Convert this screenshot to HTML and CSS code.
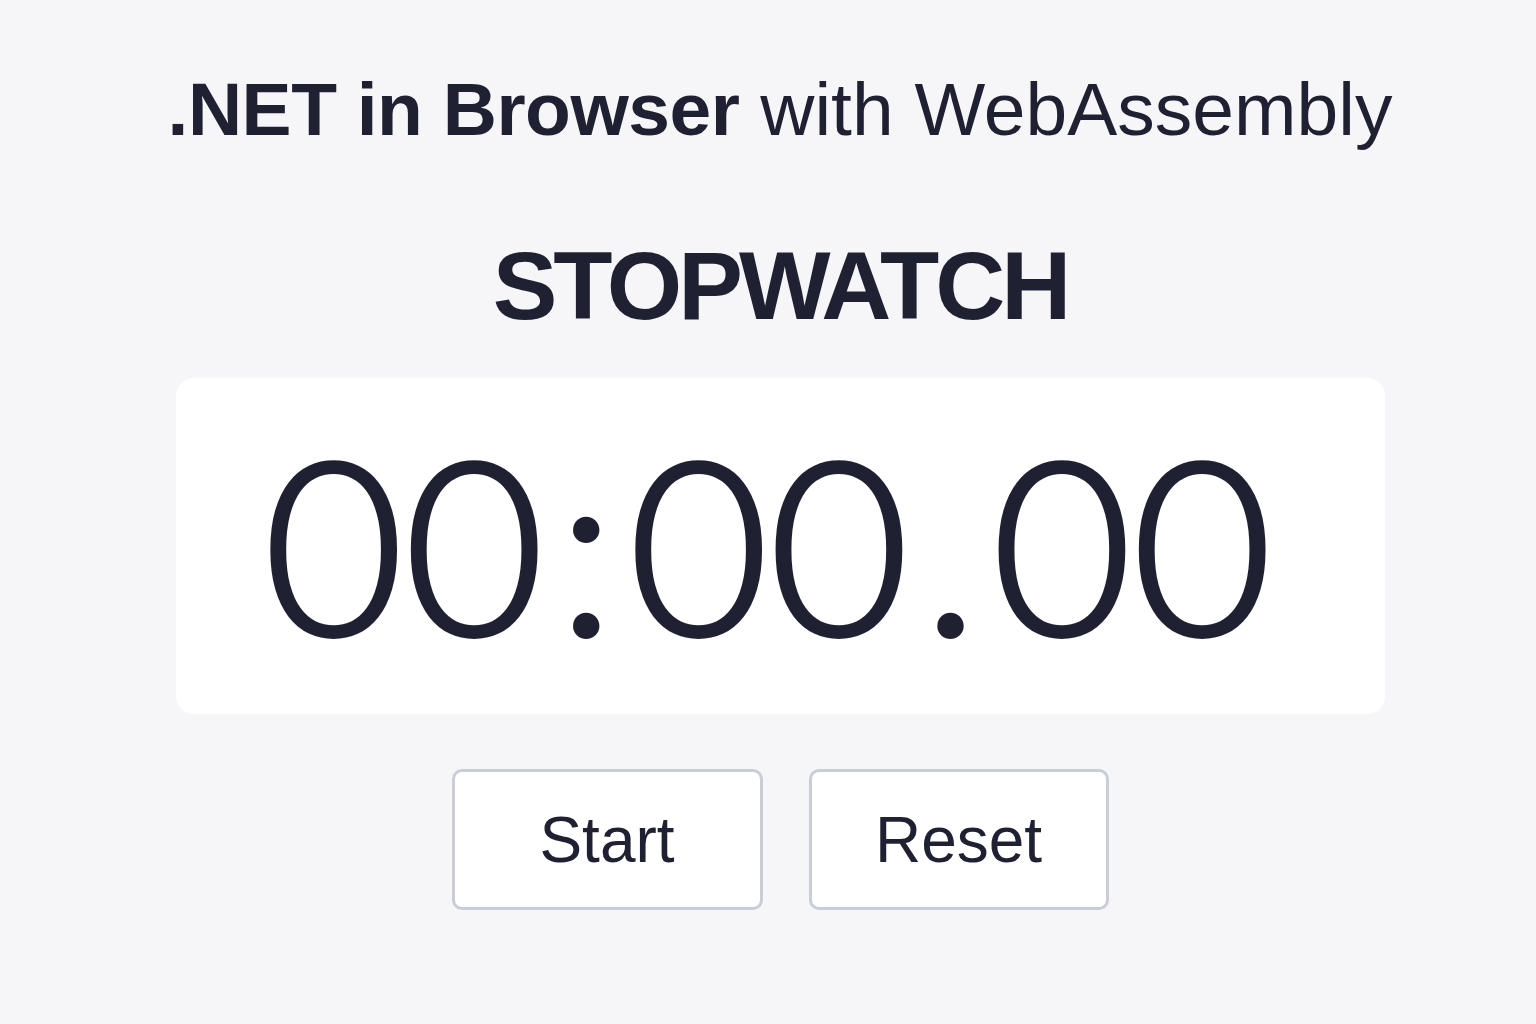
FILE: index.html
```html
<!DOCTYPE html>
<html lang="en">
<head>
<meta charset="utf-8">
<title>Stopwatch</title>
<link rel="stylesheet" href="styles.css">
</head>
<body>
<main class="app">
  <h1 class="title"><span class="title-strong">.NET in Browser</span> with WebAssembly</h1>
  <h2 class="heading">STOPWATCH</h2>
  <section class="display">
    <div class="time">00<span class="sep">:</span>00<span class="sep">.</span>00</div>
  </section>
  <div class="controls">
    <button class="btn btn-start" type="button">Start</button>
    <button class="btn btn-reset" type="button">Reset</button>
  </div>
</main>
</body>
</html>
```
FILE: styles.css
```css
html, body {
  margin: 0;
  padding: 0;
  background: #f6f6f8;
  color: #1f2132;
  font-family: "Liberation Sans", Arial, sans-serif;
}

.app {
  display: flex;
  flex-direction: column;
  align-items: center;
  padding-left: 24px;
  height: 1024px;
  box-sizing: border-box;
}

.title {
  margin: 72px 0 0;
  font-size: 75px;
  line-height: 1;
  font-weight: 400;
}

.title-strong {
  font-weight: 700;
  letter-spacing: -0.5px;
}

.heading {
  margin: 90px 0 0;
  font-size: 97px;
  line-height: 1;
  font-weight: 700;
  letter-spacing: -4px;
}

.display {
  margin-top: 44px;
  width: 1209px;
  height: 336px;
  background: #ffffff;
  border-radius: 18px;
  display: flex;
  align-items: flex-start;
  justify-content: center;
  box-sizing: border-box;
  padding: 43px 24px 0 0;
}

.time {
  font-family: Lato, "Liberation Sans", sans-serif;
  font-size: 242px;
  line-height: 1;
  font-weight: 300;
  letter-spacing: 0;
  -webkit-text-stroke: 4px #1f2132;
}

.sep {
  padding: 0 13px;
}

.controls {
  margin-top: 55px;
  display: flex;
  gap: 46px;
}

.btn {
  height: 141px;
  background: #ffffff;
  border: 3px solid #c9cdd5;
  border-radius: 10px;
  font-family: "Liberation Sans", Arial, sans-serif;
  font-size: 64px;
  color: #1f2132;
  padding: 0;
  display: flex;
  align-items: center;
  justify-content: center;
}

.btn-start {
  width: 311px;
}

.btn-reset {
  width: 300px;
}
```
